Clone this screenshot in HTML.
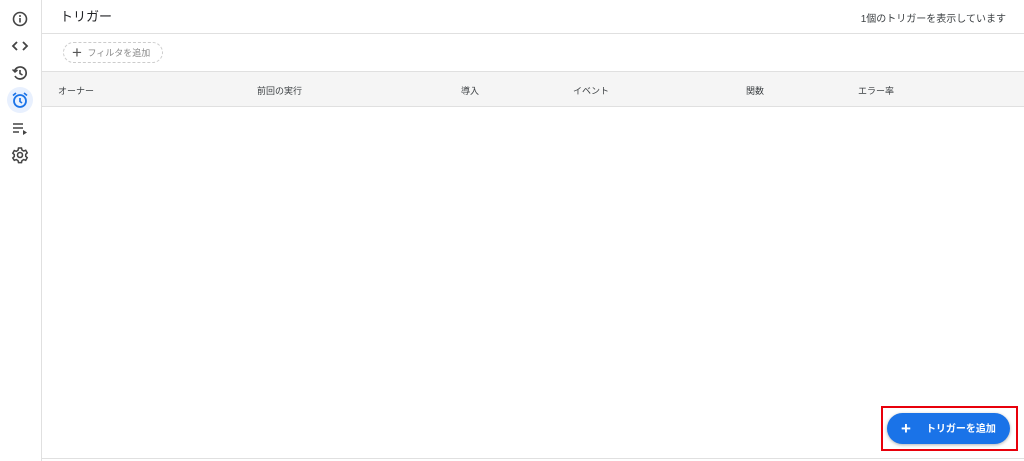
<!DOCTYPE html><html><head><meta charset="utf-8"><style>
body{margin:0;width:1024px;height:461px;background:#fff;font-family:"Liberation Sans","Noto Sans CJK JP",sans-serif;position:relative;overflow:hidden;color:#202124}
.side{position:absolute;left:0;top:0;width:41px;height:461px;border-right:1px solid #e0e0e0}
.ic{position:absolute;left:10px;width:20px;height:20px}
.abs{position:absolute}
.th{position:absolute;top:84px;font-size:9px;color:#3c4043}
</style></head><body>
<div class="side">
<svg class="ic" style="top:9px" viewBox="0 0 20 20"><circle cx="10" cy="10" r="6.5" fill="none" stroke="#444" stroke-width="1.6"/><rect x="9.2" y="9" width="1.6" height="4.5" fill="#444"/><circle cx="10" cy="7" r="1" fill="#444"/></svg>
<svg class="ic" style="top:36px" viewBox="0 0 20 20"><path d="M7 6l-4 4 4 4M13 6l4 4-4 4" fill="none" stroke="#444" stroke-width="1.8"/></svg>
<svg class="ic" style="top:63px" viewBox="0 0 20 20"><path d="M4.5 8A6 6 0 1 1 5 13" fill="none" stroke="#444" stroke-width="1.7"/><path d="M2.5 6.5l2.5 2.5 2.5-2" fill="none" stroke="#444" stroke-width="1.5"/><path d="M10 7v3.5l2.5 1.5" fill="none" stroke="#444" stroke-width="1.6"/></svg>
<div class="abs" style="left:7px;top:87px;width:26px;height:26px;border-radius:50%;background:#e8f0fe"></div>
<svg class="ic" style="top:90px" viewBox="0 0 20 20"><circle cx="10" cy="11" r="6" fill="none" stroke="#1a73e8" stroke-width="1.8"/><path d="M10 8v3.5l2 1.5M3 5.5l3-2.5M17 5.5l-3-2.5" fill="none" stroke="#1a73e8" stroke-width="1.7"/></svg>
<svg class="ic" style="top:118px" viewBox="0 0 20 20"><path d="M3 6h10M3 10h10M3 14h6" stroke="#444" stroke-width="1.6"/><path d="M13 12l4 2.5-4 2.5z" fill="#444"/></svg>
<svg class="ic" style="top:145px" viewBox="0 0 20 20"><circle cx="10" cy="10" r="2.5" fill="none" stroke="#444" stroke-width="1.6"/><path d="M8.5 3h3l.5 2 1.7 1 2-.7 1.5 2.6-1.5 1.4v2l1.5 1.4-1.5 2.6-2-.7-1.7 1-.5 2h-3l-.5-2-1.7-1-2 .7L2.8 13l1.5-1.4v-2L2.8 8.2 4.3 5.6l2 .7 1.7-1z" fill="none" stroke="#444" stroke-width="1.5"/></svg>
</div>
<div class="abs" style="left:60px;top:6px;font-size:13px">トリガー</div>
<div class="abs" style="right:18px;top:10px;font-size:10px;color:#3c4043">1個のトリガーを表示しています</div>
<div class="abs" style="left:42px;top:33px;width:982px;border-top:1px solid #e0e0e0"></div>
<div class="abs" style="left:63px;top:42px;width:98px;height:19px;border:1px dashed #ccc;border-radius:11px;font-size:9px;color:#888;line-height:19px"><span style="font-size:17px;color:#555;margin-left:8px;vertical-align:-2px">+</span> <span style="margin-left:3px">フィルタを追加</span></div>
<div class="abs" style="left:42px;top:71px;width:982px;height:34px;background:#f5f5f5;border-top:1px solid #e0e0e0;border-bottom:1px solid #e0e0e0"></div>
<div class="th" style="left:58px">オーナー</div><div class="th" style="left:257px">前回の実行</div><div class="th" style="left:461px">導入</div><div class="th" style="left:573px">イベント</div><div class="th" style="left:746px">関数</div><div class="th" style="left:858px">エラー率</div>
<div class="abs" style="left:42px;top:458px;width:982px;border-top:1px solid #e0e0e0"></div>
<div class="abs" style="left:881px;top:406px;width:133px;height:41px;border:2px solid #e8000b"></div>
<div class="abs" style="left:887px;top:413px;width:123px;height:31px;border-radius:16px;background:#1a73e8;box-shadow:0 1px 3px rgba(0,0,0,.3);color:#fff;font-size:10px;line-height:31px;font-weight:bold"><span style="font-size:17px;margin-left:14px;vertical-align:-2px">+</span><span style="margin-left:15px">トリガーを追加</span></div>
</body></html>
